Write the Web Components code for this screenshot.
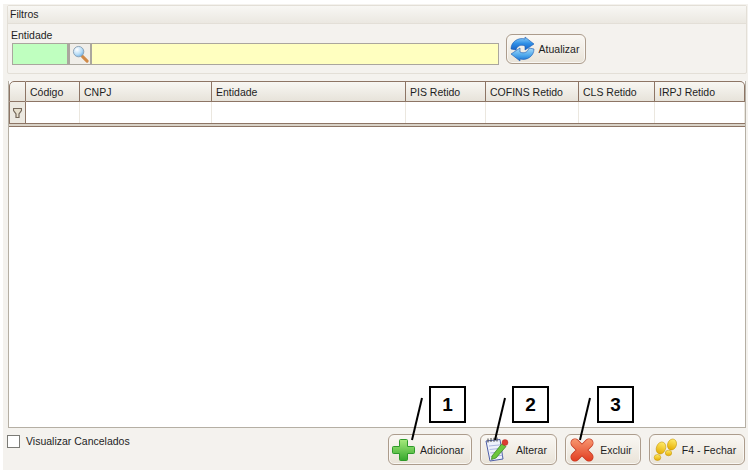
<!doctype html>
<html>
<head>
<meta charset="utf-8">
<style>
    html, body { margin: 0; background: #fff; }
    body { font: 10.5px "Liberation Sans", Arial, sans-serif; color: #1e1e1e; }
</style>
</head>
<body>
<app-form>
    <filter-panel slot="top" title="Filtros">
        <lookup-field label="Entidade"></lookup-field>
        <icon-button style="margin-top:5px" label="Atualizar" width="80" height="30" icon="refresh"></icon-button>
    </filter-panel>
    <data-grid slot="middle"></data-grid>
    <check-option slot="bottom-left" label="Visualizar Cancelados"></check-option>
    <icon-button slot="bottom-right" label="Adicionar" width="84" height="31" icon="plus"></icon-button>
    <icon-button slot="bottom-right" label="Alterar" width="77" height="31" icon="note"></icon-button>
    <icon-button slot="bottom-right" label="Excluir" width="76" height="31" icon="cross"></icon-button>
    <icon-button slot="bottom-right" label="F4 - Fechar" width="96" height="31" icon="feet"></icon-button>
    <num-callout style="left:426px;top:382px" n="1"></num-callout>
    <num-callout style="left:509px;top:382px" n="2"></num-callout>
    <num-callout style="left:594px;top:382px" n="3"></num-callout>
</app-form>
<script>
    const ICONS = {
        refresh: `<svg width="26" height="26" viewBox="0 0 26 26" style="display:block">
            <defs>
                <linearGradient id="rg" x1="0" y1="0" x2="0" y2="1"><stop offset="0" stop-color="#8fd0f8"/><stop offset=".5" stop-color="#2f8fe6"/><stop offset="1" stop-color="#1560c4"/></linearGradient>
                <linearGradient id="rg2" x1="0" y1="1" x2="0" y2="0"><stop offset="0" stop-color="#a8dcfa"/><stop offset=".6" stop-color="#4aa4ea"/><stop offset="1" stop-color="#1a6cd0"/></linearGradient>
            </defs>
            <path d="M1 13C1 6 8 1 15 3V1L24 8 15 14V10C11 8 7 10 6 14Z" fill="url(#rg)" stroke="#1858b0" stroke-width=".6"/>
            <path d="M1 13C1 6 8 1 15 3V1L24 8 15 14V10C11 8 7 10 6 14Z" transform="rotate(180 12.500 13)" fill="url(#rg2)" stroke="#1858b0" stroke-width=".6"/>
        </svg>`,
        plus: `<svg width="24" height="24" viewBox="0 0 24 24" style="display:block">
            <defs><linearGradient id="pg" x1="0" y1="0" x2="0" y2="1"><stop offset="0" stop-color="#a6ea7c"/><stop offset="1" stop-color="#36a82c"/></linearGradient></defs>
            <path d="M8.500 1.500h6a1 1 0 0 1 1 1v6h6a1 1 0 0 1 1 1v5a1 1 0 0 1-1 1h-6v6a1 1 0 0 1-1 1h-6a1 1 0 0 1-1-1v-6h-6a1 1 0 0 1-1-1v-5a1 1 0 0 1 1-1h6v-6a1 1 0 0 1 1-1z" fill="url(#pg)" stroke="#2f9a2a"/>
        </svg>`,
        note: `<svg width="26" height="26" viewBox="0 0 26 26" style="display:block">
            <path d="M2 4L16 2.500 19 22 6 24Z" fill="#eef1fb" stroke="#4f5fa8"/>
            <path d="M5 9L17 7.800M5.600 12.500L17.500 11.300M6.200 16L18 14.800M6.800 19.500L18.500 18.300" stroke="#9aa6d8" stroke-width=".8"/>
            <path d="M4 1.500v4M7 1v4M10 .8v4M13 .5v4" stroke="#444" stroke-width="1"/>
            <path d="M8 19L18 6.500 22 9.500 12 21 7.500 22.500Z" fill="#6cc63c" stroke="#2f7a20" stroke-width=".7"/>
            <circle cx="21" cy="5.500" r="3" fill="#dc3c32" stroke="#a82820" stroke-width=".4"/>
        </svg>`,
        cross: `<svg width="26" height="24" viewBox="0 0 26 24" style="display:block">
            <defs><linearGradient id="xg" gradientUnits="userSpaceOnUse" x1="0" y1="0" x2="0" y2="24"><stop offset="0" stop-color="#f89a72"/><stop offset="1" stop-color="#e03a1e"/></linearGradient></defs>
            <path d="M6 5L20 19M20 5L6 19" stroke="#c2311b" stroke-width="9" stroke-linecap="round" fill="none"/>
            <path d="M6 5L20 19M20 5L6 19" stroke="url(#xg)" stroke-width="7.500" stroke-linecap="round" fill="none"/>
        </svg>`,
        feet: `<svg width="24" height="24" viewBox="0 0 24 24" style="display:block">
            <defs><linearGradient id="fg" x1="0" y1="0" x2="0" y2="1"><stop offset="0" stop-color="#ffec6a"/><stop offset="1" stop-color="#e6ac00"/></linearGradient></defs>
            <g fill="url(#fg)" stroke="#c09000" stroke-width=".5">
                <ellipse cx="8" cy="10" rx="4.600" ry="6.200" transform="rotate(20 8 10)"/>
                <ellipse cx="4.500" cy="19.500" rx="3.300" ry="3"/>
                <ellipse cx="19" cy="6.500" rx="4.400" ry="5.600" transform="rotate(20 19 6.500)"/>
                <ellipse cx="15.500" cy="15" rx="3.200" ry="2.800"/>
            </g>
        </svg>`
    }

    customElements.define('app-form', class extends HTMLElement {
        constructor() {
            super()
            this.attachShadow({ mode: 'open' }).innerHTML = `
                <style>
                    :host {
                        display: flex;
                        flex-direction: column;
                        position: relative;
                        box-sizing: border-box;
                        width: 745px;
                        height: 466px;
                        margin: 4px 0 0 3px;
                        padding: 1px 1px 0 4px;
                        background: #f4f2ee;
                    }
                    .mid { display: flex; flex: 1; margin: 7px 1px 0 1px; min-height: 0; }
                    .foot { display: flex; justify-content: space-between; height: 36px; margin-top: 6px; margin-right: 2px; }
                    .right { display: flex; gap: 8px; align-items: flex-start; }
                </style>
                <slot name="top"></slot>
                <div class="mid"><slot name="middle"></slot></div>
                <div class="foot">
                    <slot name="bottom-left"></slot>
                    <div class="right"><slot name="bottom-right"></slot></div>
                </div>
                <slot></slot>
            `
        }
    })

    customElements.define('filter-panel', class extends HTMLElement {
        constructor() {
            super()
            this.attachShadow({ mode: 'open' }).innerHTML = `
                <style>
                    :host {
                        display: block;
                        box-sizing: border-box;
                        height: 69px;
                        background: #f4f2ee;
                        border: 1px solid #e3dfd7;
                        border-radius: 2px;
                    }
                    .head {
                        height: 17px;
                        line-height: 17px;
                        padding-left: 2px;
                        background: linear-gradient(#f8f7f4, #ebe8e1);
                        border-bottom: 1px solid #e3dfd7;
                    }
                    .body { display: flex; align-items: flex-start; gap: 7px; padding: 5px 0 0 4px; }
                </style>
                <div class="head">${this.getAttribute('title')}</div>
                <div class="body"><slot></slot></div>
            `
        }
    })

    customElements.define('lookup-field', class extends HTMLElement {
        constructor() {
            super()
            this.attachShadow({ mode: 'open' }).innerHTML = `
                <style>
                    :host { display: block; }
                    .lbl { height: 14px; line-height: 13px; margin-left: -1px; }
                    .row { display: flex; height: 22px; }
                    .row div { box-sizing: border-box; border: 1px solid #aaa69e; }
                    .code { width: 56px; background: #bfffbf; }
                    .find {
                        width: 24px;
                        background: #f0eee9;
                        border-left: 2px solid #aaa69e !important;
                        border-right: 2px solid #aaa69e !important;
                        display: flex;
                        align-items: center;
                        justify-content: center;
                    }
                    .name { width: 407px; background: #ffffc0; border-left: 0 !important; }
                </style>
                <div class="lbl">${this.getAttribute('label')}</div>
                <div class="row">
                    <div class="code"></div>
                    <div class="find">
                        <svg width="17" height="18" viewBox="0 0 18 19">
                            <defs><radialGradient id="lens" cx=".35" cy=".3" r=".8"><stop offset="0" stop-color="#ffffff"/><stop offset=".6" stop-color="#b6dcf6"/><stop offset="1" stop-color="#5fa6e2"/></radialGradient></defs>
                            <path d="M11 12l5 5" stroke="#d08a48" stroke-width="3.200" stroke-linecap="round"/>
                            <circle cx="7" cy="7" r="5.500" fill="url(#lens)" stroke="#8aa0b4"/>
                        </svg>
                    </div>
                    <div class="name"></div>
                </div>
            `
        }
    })

    customElements.define('icon-button', class extends HTMLElement {
        constructor() {
            super()
            const w = this.getAttribute('width')
            const h = this.getAttribute('height')
            this.attachShadow({ mode: 'open' }).innerHTML = `
                <style>
                    :host {
                        display: flex;
                        align-items: center;
                        box-sizing: border-box;
                        width: ${w}px;
                        height: ${h}px;
                        padding-left: 3px;
                        border: 1px solid #ac9c8c;
                        border-radius: 6px;
                        background: linear-gradient(#faf8f4, #e9e3d8);
                        box-shadow: inset 0 0 0 1px #f9f7f3;
                    }
                    .ic { flex: none; }
                    .t { flex: 1; text-align: center; white-space: nowrap; padding-right: 3px; }
                </style>
                <div class="ic">${ICONS[this.getAttribute('icon')]}</div>
                <div class="t">${this.getAttribute('label')}</div>
            `
        }
    })

    customElements.define('check-option', class extends HTMLElement {
        constructor() {
            super()
            this.attachShadow({ mode: 'open' }).innerHTML = `
                <style>
                    :host { display: flex; gap: 6px; align-items: flex-start; padding-top: 1px; }
                    .box { width: 11px; height: 11px; border: 1px solid #7b7b76; background: #fff; }
                    .t { line-height: 13px; }
                </style>
                <div class="box"></div>
                <div class="t">${this.getAttribute('label')}</div>
            `
        }
    })

    customElements.define('data-grid', class extends HTMLElement {
        constructor() {
            super()
            const cols = [['Código', 54], ['CNPJ', 132], ['Entidade', 194], ['PIS Retido', 80], ['COFINS Retido', 93], ['CLS Retido', 76], ['IRPJ Retido', 90]]
            const tpl = cols.map(c => c[1] + 'px').join(' ')
            this.attachShadow({ mode: 'open' }).innerHTML = `
                <style>
                    :host {
                        display: block;
                        flex: 1;
                        box-sizing: border-box;
                        background: #fff;
                        border-left: 1px solid #b5afa4;
                        border-right: 1px solid #b5afa4;
                        border-bottom: 1px solid #b5afa4;
                    }
                    .grid { display: grid; grid-template-columns: 17px ${tpl}; }
                    .h {
                        box-sizing: border-box;
                        height: 21px;
                        line-height: 20px;
                        padding-left: 4px;
                        white-space: nowrap;
                        background: linear-gradient(#f8f7f3, #e7e3da);
                        border-top: 1px solid #8d7565;
                        border-right: 1px solid #8d7565;
                        border-bottom: 1px solid #8d7565;
                    }
                    .h:first-child { border-left: 1px solid #8d7565; border-top-left-radius: 5px; }
                    .h:nth-child(8) { border-top-right-radius: 5px; }
                    .f { box-sizing: border-box; height: 21px; border-right: 1px solid #ebe7df; }
                    .f.ind {
                        background: #ece9e1;
                        border-left: 1px solid #8d7565;
                        border-right: 1px solid #8d7565;
                        display: flex;
                        align-items: center;
                        justify-content: center;
                    }
                    .bar {
                        box-sizing: border-box;
                        height: 4px;
                        background: #d9d3c8;
                        border-top: 1px solid #8d7565;
                        border-bottom: 1px solid #8d7565;
                    }
                </style>
                <div class="grid">
                    <div class="h"></div>
                    ${cols.map(c => `<div class="h">${c[0]}</div>`).join('')}
                    <div class="f ind">
                        <svg width="9" height="10" viewBox="0 0 9 10"><path d="M.5.5h8v2L6 6v3.500H3V6L.5 2.500z" fill="#e6dfcc" stroke="#75685a" stroke-width="1.200"/></svg>
                    </div>
                    ${cols.map(() => '<div class="f"></div>').join('')}
                </div>
                <div class="bar"></div>
            `
        }
    })

    customElements.define('num-callout', class extends HTMLElement {
        constructor() {
            super()
            this.attachShadow({ mode: 'open' }).innerHTML = `
                <style>
                    :host { display: block; position: absolute; width: 37px; height: 37px; }
                    .n {
                        box-sizing: border-box;
                        width: 37px;
                        height: 37px;
                        background: #fff;
                        border: 2px solid #000;
                        font: bold 19px "Liberation Sans", sans-serif;
                        color: #000;
                        text-align: center;
                        line-height: 33px;
                    }
                    svg { position: absolute; left: -18px; top: 12px; overflow: visible; }
                </style>
                <div class="n">${this.getAttribute('n')}</div>
                <svg width="12" height="43"><path d="M11 0L1 42" stroke="#000" stroke-width="2" fill="none"/></svg>
            `
        }
    })
</script>
</body>
</html>
